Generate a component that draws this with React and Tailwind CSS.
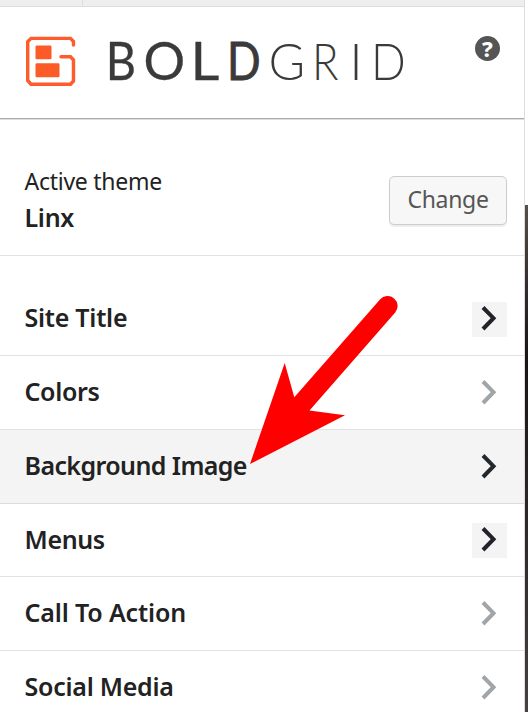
const rows = [
  { label: "Site Title", box: true, color: "#23222a", height: "h-[74px]", tracking: "tracking-[-0.25px]" },
  { label: "Colors", color: "#a0a5aa", height: "h-[74px]", tracking: "tracking-[-0.35px]" },
  { label: "Background Image", color: "#23282d", height: "h-[74px]", active: true, tracking: "tracking-[-0.6px]" },
  { label: "Menus", box: true, color: "#23222a", height: "h-[73px]", tracking: "tracking-[-0.35px]" },
  { label: "Call To Action", color: "#a0a5aa", height: "h-[74px]", tracking: "tracking-[-0.15px]" },
  { label: "Social Media", color: "#a0a5aa", height: "h-[74px]", tracking: "tracking-[-0.25px]" },
];

function Logo() {
  return (
    <svg width="384" height="56" viewBox="22 33 384 56" className="shrink-0 overflow-visible">
      <g fill="none" stroke="#ff5c2b" strokeWidth="3.4" strokeLinecap="round">
        <path d="M73.5 45V41.5L70.5 38.4H31L27.7 41.7V80.5L31 84.2H70.5L73.5 81V60L70.5 56.8H61" />
      </g>
      <rect x="35.5" y="45.5" width="16" height="13.8" rx="1.3" fill="#fc5b28" />
      <rect x="35.5" y="63.3" width="24" height="14" rx="1.3" fill="#fc5b28" />
      <g fontFamily="Lato, sans-serif" fontSize="52" fill="#3a3a3a" stroke="#3a3a3a" strokeWidth="0.3">
        <text transform="translate(105.8 80.2) scale(.9 1)">B</text>
        <text transform="translate(143.5 80.2)">O</text>
        <text transform="translate(190.5 80.2) scale(1.08 1)">L</text>
        <text transform="translate(227 80.2) scale(.85 1)" strokeWidth="0.9">D</text>
      </g>
      <g fontFamily="Lato, sans-serif" fontSize="52" fontWeight="300" fill="#3a3a3a">
        <text transform="translate(268.5 80.2) scale(.96 1)">G</text>
        <text transform="translate(312 80.2) scale(.84 1)">R</text>
        <text transform="translate(349.2 80.2)">I</text>
        <text transform="translate(371 80.2) scale(.88 1)">D</text>
      </g>
    </svg>
  );
}

function Row({ label, box, color, height, active, tracking }) {
  return (
    <div className={`${height} ${active ? "bg-[#f4f4f4] border-[#dcdcdc]" : "border-[#e2e2e2]"} flex shrink-0 items-center justify-between border-b pl-[24.5px] pr-[17px]`}>
      <span className={`${tracking} pb-[3px] text-[25px] leading-[34px] font-[560]`}>{label}</span>
      <span className={`${box ? "bg-[#f4f4f4]" : ""} mt-px flex h-[35px] w-[35px] items-center justify-center`}>
        <svg width="35" height="35" viewBox="0 0 35 35">
          <path d="M11 5.5L21.5 16.2L11 27" fill="none" stroke={color} strokeWidth="4" />
        </svg>
      </span>
    </div>
  );
}

export default function App() {
  return (
    <div className="relative flex h-[712px] w-[528px] overflow-hidden bg-white font-['Noto_Sans',sans-serif] text-[#222]">
      <div className="flex w-[525px] shrink-0 flex-col border-r border-[#ddd]">
        <div className="h-[7px] shrink-0 border-b border-[#ddd] bg-[#eee]">
          <div className="h-full w-[83px] border-r border-[#ddd]" />
        </div>
        <header className="flex h-[112px] shrink-0 items-start justify-between border-b border-[#aaa] pt-[26px] pr-[24px] pl-[22px]">
          <Logo />
          <div className="mt-[3px] flex size-[25px] items-center justify-center rounded-full bg-[#555] text-[22px] leading-[25px] font-extrabold text-white">?</div>
        </header>
        <section className="flex h-[137px] shrink-0 items-center justify-between border-t border-b border-t-[#ddd] border-b-[#e2e2e2] pr-[17px] pl-[24.5px]">
          <div className="pt-[23px]">
            <div className="text-[23px] leading-[36px] tracking-[-0.27px]">Active theme</div>
            <div className="text-[25px] leading-[36px] font-[560] tracking-[-0.3px]">Linx</div>
          </div>
          <button className="mt-[25px] h-[49px] w-[118px] rounded-[5px] border border-[#ccc] bg-[#f7f7f7] pb-[2px] text-[23px] leading-[43px] tracking-[-0.3px] text-[#555] shadow-[0_2px_0_#eee]">Change</button>
        </section>
        <nav className="flex flex-col pt-[26px]">
          {rows.map((row) => <Row key={row.label} {...row} />)}
        </nav>
      </div>
      <aside className="flex h-full w-[3px] flex-col">
        <div className="h-[205px] bg-white" />
        <div className="flex-1 bg-linear-to-b from-[#565048] via-[#171317] via-30% to-[#454142]" />
      </aside>
      <svg className="absolute top-0 left-0" width="528" height="712" viewBox="0 0 528 712">
        <path d="M250 464L284.7 363L294.3 397.2L380 299.5A10 10 0 0 1 395.2 312.5L309.5 410.5L345 415.2Z" fill="#f00" />
      </svg>
    </div>
  );
}
